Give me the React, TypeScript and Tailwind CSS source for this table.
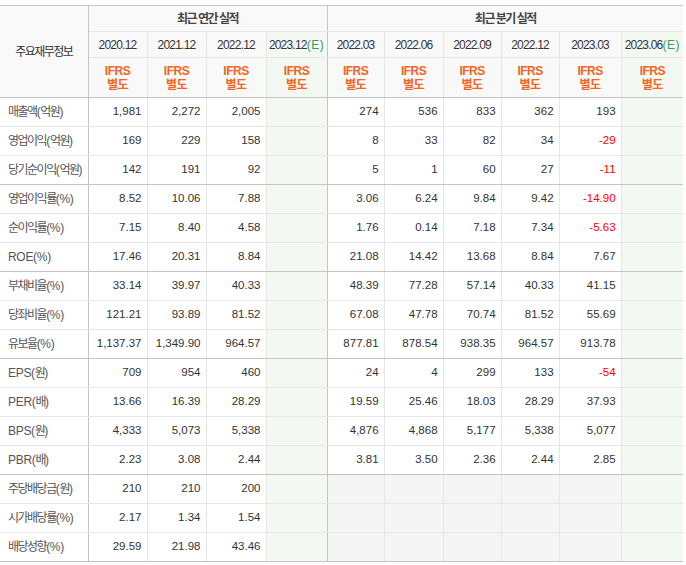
import React from "react";

type Row = { label: string; a: string[]; q: string[]; group?: boolean; div?: boolean };

const rows: Row[] = [
  { label: "매출액(억원)", a: ["1,981", "2,272", "2,005"], q: ["274", "536", "833", "362", "193"] },
  { label: "영업이익(억원)", a: ["169", "229", "158"], q: ["8", "33", "82", "34", "-29"] },
  { label: "당기순이익(억원)", a: ["142", "191", "92"], q: ["5", "1", "60", "27", "-11"], group: true },
  { label: "영업이익률(%)", a: ["8.52", "10.06", "7.88"], q: ["3.06", "6.24", "9.84", "9.42", "-14.90"] },
  { label: "순이익률(%)", a: ["7.15", "8.40", "4.58"], q: ["1.76", "0.14", "7.18", "7.34", "-5.63"] },
  { label: "ROE(%)", a: ["17.46", "20.31", "8.84"], q: ["21.08", "14.42", "13.68", "8.84", "7.67"], group: true },
  { label: "부채비율(%)", a: ["33.14", "39.97", "40.33"], q: ["48.39", "77.28", "57.14", "40.33", "41.15"] },
  { label: "당좌비율(%)", a: ["121.21", "93.89", "81.52"], q: ["67.08", "47.78", "70.74", "81.52", "55.69"] },
  { label: "유보율(%)", a: ["1,137.37", "1,349.90", "964.57"], q: ["877.81", "878.54", "938.35", "964.57", "913.78"], group: true },
  { label: "EPS(원)", a: ["709", "954", "460"], q: ["24", "4", "299", "133", "-54"] },
  { label: "PER(배)", a: ["13.66", "16.39", "28.29"], q: ["19.59", "25.46", "18.03", "28.29", "37.93"] },
  { label: "BPS(원)", a: ["4,333", "5,073", "5,338"], q: ["4,876", "4,868", "5,177", "5,338", "5,077"] },
  { label: "PBR(배)", a: ["2.23", "3.08", "2.44"], q: ["3.81", "3.50", "2.36", "2.44", "2.85"], group: true },
  { label: "주당배당금(원)", a: ["210", "210", "200"], q: ["", "", "", "", ""], div: true },
  { label: "시가배당률(%)", a: ["2.17", "1.34", "1.54"], q: ["", "", "", "", ""], div: true },
  { label: "배당성향(%)", a: ["29.59", "21.98", "43.46"], q: ["", "", "", "", ""], div: true, group: true },
];

const annual = ["2020.12", "2021.12", "2022.12"];
const quarter = ["2022.03", "2022.06", "2022.09", "2022.12", "2023.03"];
const widths = [88, 59, 59, 60, 61, 57, 59, 58, 58, 62, 62];

const font = { fontFamily: '"Liberation Sans", "Noto Sans CJK KR", sans-serif' } as React.CSSProperties;

function Label({ text }: { text: string }) {
  const parts = text.match(/[\uAC00-\uD7A3]+|[^\uAC00-\uD7A3]+/g) || [];
  return (
    <>
      {parts.map((p, i) =>
        /[\uAC00-\uD7A3]/.test(p) ? (
          <span key={i} className="tracking-[-1.5px]">
            {p}
          </span>
        ) : (
          <span key={i} className="tracking-[-0.3px]">
            {p}
          </span>
        )
      )}
    </>
  );
}

function Ifrs() {
  return (
    <div className="text-[12px] leading-[14px] font-semibold text-[#f26522] tracking-[-0.5px]">
      IFRS
      <br />
      별도
    </div>
  );
}

function Num({ v }: { v: string }) {
  const neg = v.startsWith("-");
  return <span className={neg ? "text-[#ff0000]" : "text-[#333]"}>{v}</span>;
}

export default function App() {
  return (
    <div className="w-[686px] h-[565px] bg-white pt-[5px]" style={font}>
      <table className="table-fixed border-collapse w-[683px] text-[11px] text-[#333]">
        <colgroup>
          {widths.map((w, i) => (
            <col key={i} style={{ width: w }} />
          ))}
        </colgroup>
        <thead>
          <tr className="h-[26px]">
            <th
              rowSpan={3}
              className="bg-[#f9f9f9] border-t border-t-[#c4c4c4] border-b border-b-[#c4c4c4] border-r border-r-[#c4c4c4] text-[12px] font-normal text-[#333] tracking-[-1.5px]"
            >
              주요재무정보
            </th>
            <th
              colSpan={4}
              className="bg-[#f9f9f9] border-t border-t-[#c4c4c4] border-b border-b-[#e6e6e6] border-r border-r-[#c4c4c4] text-[12px] font-bold text-[#444] tracking-[-1.5px]"
            >
              최근 연간 실적
            </th>
            <th
              colSpan={6}
              className="bg-[#f9f9f9] border-t border-t-[#c4c4c4] border-b border-b-[#e6e6e6] text-[12px] font-bold text-[#444] tracking-[-1.5px]"
            >
              최근 분기 실적
            </th>
          </tr>
          <tr className="h-[26px]">
            {annual.map((d) => (
              <th key={d} className="bg-[#f9f9f9] border-b border-b-[#e6e6e6] border-r border-r-[#e6e6e6] font-normal text-[12px] text-[#333] tracking-[-0.8px]">
                {d}
              </th>
            ))}
            <th className="bg-[#f3f8f3] border-b border-b-[#e6e6e6] border-r border-r-[#c4c4c4] font-normal text-[12px] text-[#333] tracking-[-0.8px]">
              2023.12<span className="text-[#3c9a5a] tracking-[0.5px]">(E)</span>
            </th>
            {quarter.map((d) => (
              <th key={d} className="bg-[#f9f9f9] border-b border-b-[#e6e6e6] border-r border-r-[#e6e6e6] font-normal text-[12px] text-[#333] tracking-[-0.8px]">
                {d}
              </th>
            ))}
            <th className="bg-[#f3f8f3] border-b border-b-[#e6e6e6] font-normal text-[12px] text-[#333] tracking-[-0.8px]">
              2023.06<span className="text-[#3c9a5a] tracking-[0.5px]">(E)</span>
            </th>
          </tr>
          <tr className="h-[40px]">
            {annual.map((d) => (
              <th key={d} className="bg-[#f9f9f9] border-b border-b-[#c4c4c4] border-r border-r-[#e6e6e6]">
                <Ifrs />
              </th>
            ))}
            <th className="bg-[#f3f8f3] border-b border-b-[#c4c4c4] border-r border-r-[#c4c4c4]">
              <Ifrs />
            </th>
            {quarter.map((d) => (
              <th key={d} className="bg-[#f9f9f9] border-b border-b-[#c4c4c4] border-r border-r-[#e6e6e6]">
                <Ifrs />
              </th>
            ))}
            <th className="bg-[#f3f8f3] border-b border-b-[#c4c4c4]">
              <Ifrs />
            </th>
          </tr>
        </thead>
        <tbody>
          {rows.map((r) => {
            const bb = r.group ? "border-b border-b-[#c4c4c4]" : "border-b border-b-[#e6e6e6]";
            return (
              <tr key={r.label} className="h-[29px]">
                <th className={`text-left font-normal pl-[8px] text-[12px] text-[#555] whitespace-nowrap border-r border-r-[#c4c4c4] ${bb}`}>
                  <Label text={r.label} />
                </th>
                {r.a.map((v, i) => (
                  <td key={i} className={`text-right pr-[5px] text-[11.5px] border-r border-r-[#e6e6e6] ${bb}`}>
                    <Num v={v} />
                  </td>
                ))}
                <td className={`bg-[#f3f8f3] border-r border-r-[#c4c4c4] ${bb}`}></td>
                {r.q.map((v, i) => (
                  <td
                    key={i}
                    className={`text-right pr-[5px] text-[11.5px] border-r border-r-[#e6e6e6] ${r.div ? "bg-[#f5f5f5]" : ""} ${bb}`}
                  >
                    <Num v={v} />
                  </td>
                ))}
                <td className={`bg-[#f3f8f3] ${bb}`}></td>
              </tr>
            );
          })}
        </tbody>
      </table>
    </div>
  );
}
